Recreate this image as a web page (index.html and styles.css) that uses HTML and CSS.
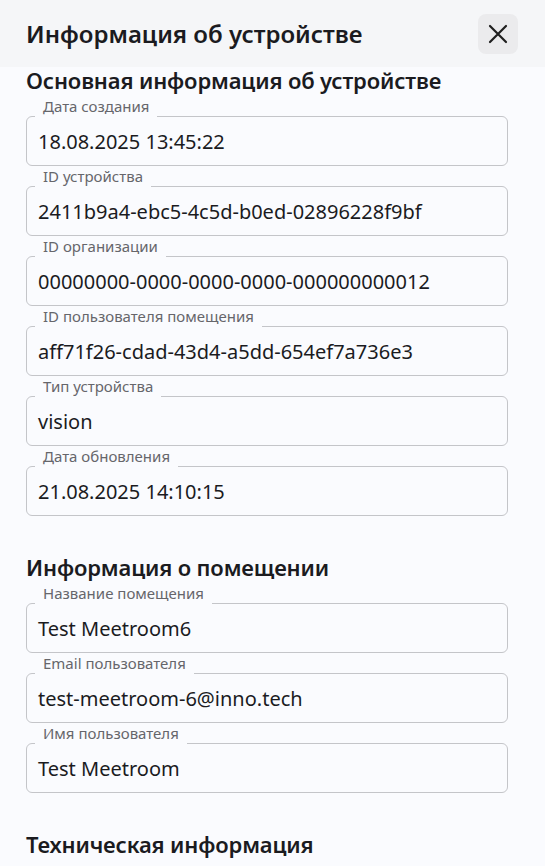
FILE: index.html
```html
<!DOCTYPE html>
<html lang="ru">
<head>
<meta charset="utf-8">
<title>Информация об устройстве</title>
<link rel="stylesheet" href="styles.css">
</head>
<body>
<div class="panel">
  <header class="header">
    <h1 class="title">Информация об устройстве</h1>
    <button class="close" aria-label="Закрыть">
      <svg width="20" height="20" viewBox="0 0 20 20"><path d="M2 2 L18 18 M18 2 L2 18" stroke="#1f1f1f" stroke-width="2.2" stroke-linecap="round"/></svg>
    </button>
  </header>
  <main class="content">
    <section class="section">
      <h2 class="section-title">Основная информация об устройстве</h2>
      <div class="field"><span class="label">Дата создания</span><div class="box">18.08.2025 13:45:22</div></div>
      <div class="field"><span class="label">ID устройства</span><div class="box">2411b9a4-ebc5-4c5d-b0ed-02896228f9bf</div></div>
      <div class="field"><span class="label">ID организации</span><div class="box">00000000-0000-0000-0000-000000000012</div></div>
      <div class="field"><span class="label">ID пользователя помещения</span><div class="box">aff71f26-cdad-43d4-a5dd-654ef7a736e3</div></div>
      <div class="field"><span class="label">Тип устройства</span><div class="box">vision</div></div>
      <div class="field"><span class="label">Дата обновления</span><div class="box">21.08.2025 14:10:15</div></div>
    </section>
    <section class="section">
      <h2 class="section-title">Информация о помещении</h2>
      <div class="field"><span class="label">Название помещения</span><div class="box">Test Meetroom6</div></div>
      <div class="field"><span class="label">Email пользователя</span><div class="box">test-meetroom-6@inno.tech</div></div>
      <div class="field"><span class="label">Имя пользователя</span><div class="box">Test Meetroom</div></div>
    </section>
    <section class="section">
      <h2 class="section-title">Техническая информация</h2>
    </section>
  </main>
</div>
</body>
</html>
```
FILE: styles.css
```css
* { box-sizing: border-box; }
html, body { margin: 0; padding: 0; }
body {
  background: #fafbfe;
  font-family: "Noto Sans", "Open Sans", sans-serif;
  color: #1b1b1f;
  height: 866px;
  overflow: hidden;
}
.header {
  height: 67px;
  background: #f5f6f8;
  display: flex;
  align-items: center;
  justify-content: space-between;
  padding: 0 27px 0 26px;
}
.title {
  margin: 0;
  font-size: 24px;
  font-weight: 600;
  line-height: 32px;
}
.close {
  width: 40px;
  height: 40px;
  border: none;
  border-radius: 8px;
  background: #ebebed;
  display: flex;
  align-items: center;
  justify-content: center;
  padding: 0;
}
.content {
  padding: 0 37px 0 26px;
}
.section + .section { margin-top: 38px; }
.section-title {
  margin: 0 0 2px;
  font-size: 22px;
  font-weight: 600;
  line-height: 27px;
  letter-spacing: -0.15px;
}
.field {
  display: flex;
  flex-direction: column;
  align-items: flex-start;
}
.label {
  position: relative;
  z-index: 1;
  margin-left: 9px;
  padding: 0 8px;
  height: 21px;
  margin-bottom: -1px;
  line-height: 21px;
  font-size: 15px;
  color: #66666b;
  background: #fafbfe;
}
.box {
  align-self: stretch;
  height: 50px;
  border: 1px solid #c4c5c9;
  border-radius: 6px;
  padding: 0 11px;
  display: flex;
  align-items: center;
  font-size: 20px;
  color: #1b1b1f;
}
```
